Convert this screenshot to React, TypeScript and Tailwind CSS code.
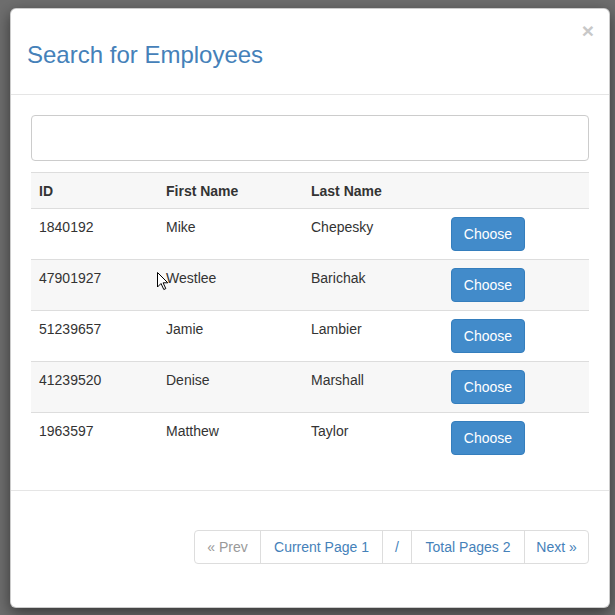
import React, { useState } from 'react';

type Employee = { id: string; first: string; last: string };

const employees: Employee[] = [
  { id: '1840192', first: 'Mike', last: 'Chepesky' },
  { id: '47901927', first: 'Westlee', last: 'Barichak' },
  { id: '51239657', first: 'Jamie', last: 'Lambier' },
  { id: '41239520', first: 'Denise', last: 'Marshall' },
  { id: '1963597', first: 'Matthew', last: 'Taylor' },
];

const cols = 'grid grid-cols-[127px_145px_140px_146px]';

const App: React.FC = () => {
  const [query, setQuery] = useState('');

  return (
    <div
      className="relative min-h-[615px] bg-[#6e6e6e] pt-[8px] pl-[10px] text-[14px] leading-[20px] text-[#333]"
      style={{ fontFamily: '"Liberation Sans", Arial, sans-serif' }}
    >
      <div className="flex h-[600px] w-[600px] flex-col rounded-[6px] border border-black/20 bg-white shadow-[0_5px_15px_rgba(0,0,0,0.5)]">
        {/* Header */}
        <div className="relative h-[86px] shrink-0 border-b border-[#e5e5e5] pl-[16px] pt-[33px]">
          <h4 className="text-[24px] leading-[26px] text-[#4581b9]">Search for Employees</h4>
          <button className="absolute right-[15px] top-[11px] text-[21px] font-bold leading-none text-[#c8c8c8]">
            ×
          </button>
        </div>

        {/* Body */}
        <div className="h-[395px] shrink-0 px-[20px] pt-[20px]">
          <input
            className="block h-[46px] w-full rounded-[4px] border border-[#ccc] px-[12px] text-[14px] outline-none"
            value={query}
            onChange={(e) => setQuery(e.target.value)}
          />
          <div className="mt-[11px]">
            <div className={`${cols} h-[36px] items-center border-t border-[#ddd] bg-[#f7f7f7] font-bold`}>
              <div className="px-[8px]">ID</div>
              <div className="px-[8px]">First Name</div>
              <div className="px-[8px]">Last Name</div>
              <div />
            </div>
            {employees.map((e, i) => (
              <div
                key={e.id}
                className={`${cols} h-[51px] border-t border-[#ddd] ${i % 2 === 1 ? 'bg-[#f7f7f7]' : 'bg-white'}`}
              >
                <div className="px-[8px] pt-[8px]">{e.id}</div>
                <div className="px-[8px] pt-[8px]">{e.first}</div>
                <div className="px-[8px] pt-[8px]">{e.last}</div>
                <div className="px-[8px] pt-[8px]">
                  <button className="h-[34px] w-[74px] rounded-[4px] border border-[#357ebd] bg-[#428bca] text-[14px] text-white">
                    Choose
                  </button>
                </div>
              </div>
            ))}
          </div>
        </div>

        {/* Footer */}
        <div className="flex flex-1 justify-end border-t border-[#e5e5e5] px-[20px] pt-[39px]">
          <div className="flex h-[34px] overflow-hidden rounded-[4px] border border-[#ddd]">
            <span className="flex w-[65px] items-center justify-center text-[#999]">« Prev</span>
            <a className="flex w-[122px] items-center justify-center border-l border-[#ddd] text-[#4581b9]">Current Page 1</a>
            <a className="flex w-[29px] items-center justify-center border-l border-[#ddd] text-[#4581b9]">/</a>
            <a className="flex w-[113px] items-center justify-center border-l border-[#ddd] text-[#4581b9]">Total Pages 2</a>
            <a className="flex w-[64px] items-center justify-center border-l border-[#ddd] text-[#4581b9]">Next »</a>
          </div>
        </div>
      </div>

      {/* mouse pointer */}
      <svg className="absolute left-[157px] top-[272px]" width="12" height="19" viewBox="0 0 12 19">
        <path d="M0.5 0.5 L0.5 15 L4 11.5 L6.8 17.5 L8.8 16.6 L6.1 10.8 L10.8 10.8 Z" fill="white" stroke="black" strokeWidth="1" />
      </svg>
    </div>
  );
};

export default App;
